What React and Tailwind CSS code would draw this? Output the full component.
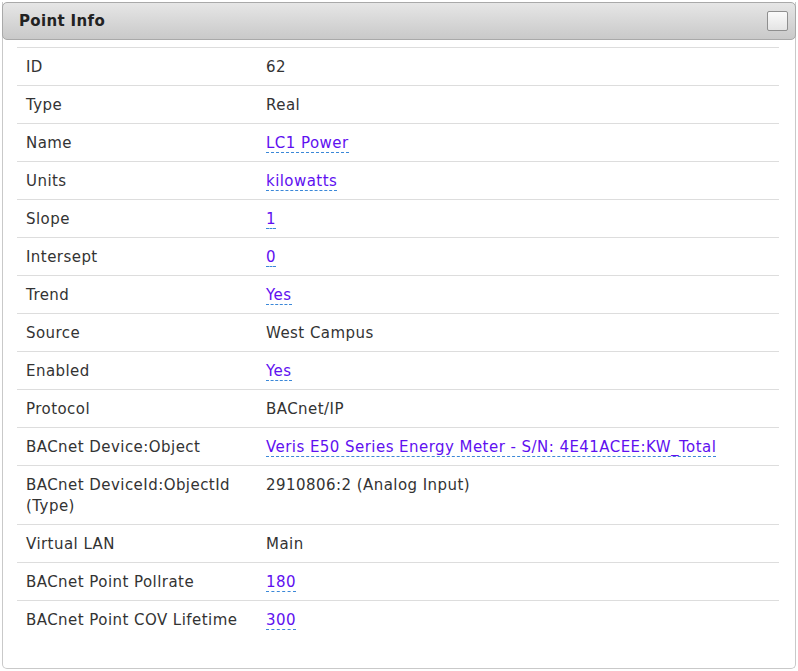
import React from 'react';

const rows = [
  { label: 'ID', value: '62' },
  { label: 'Type', value: 'Real' },
  { label: 'Name', value: 'LC1 Power', link: true },
  { label: 'Units', value: 'kilowatts', link: true },
  { label: 'Slope', value: '1', link: true },
  { label: 'Intersept', value: '0', link: true },
  { label: 'Trend', value: 'Yes', link: true },
  { label: 'Source', value: 'West Campus' },
  { label: 'Enabled', value: 'Yes', link: true },
  { label: 'Protocol', value: 'BACnet/IP' },
  { label: 'BACnet Device:Object', value: 'Veris E50 Series Energy Meter - S/N: 4E41ACEE:KW_Total', link: true },
  { label: 'BACnet DeviceId:ObjectId (Type)', value: '2910806:2 (Analog Input)' },
  { label: 'Virtual LAN', value: 'Main' },
  { label: 'BACnet Point Pollrate', value: '180', link: true },
  { label: 'BACnet Point COV Lifetime', value: '300', link: true },
];

export default function App() {
  return (
    <div className="w-[798px] h-[671px] bg-white pt-[2px] pl-[2px] pr-[2px]" style={{ fontFamily: '"DejaVu Sans", Verdana, sans-serif' }}>
      <div className="h-[667px] border border-[#c9c9c9] border-t-0 rounded-b-[5px] flex flex-col">
        {/* header */}
        <div className="h-[38px] -mx-[1px] flex items-center justify-between pl-[16px] pr-[7px] rounded-[5px] border border-[#a9a9a9] bg-gradient-to-b from-[#e6e6e6] to-[#c9c9c9]">
          <span className="text-[15px] font-bold text-[#222] tracking-[0.35px]">Point Info</span>
          <span className="w-[21px] h-[20px] rounded-[2px] border border-[#8f8f8f] bg-gradient-to-b from-[#fafafa] to-[#e4e4e4]" />
        </div>

        {/* body */}
        <div className="pt-[7px] pl-[14px] pr-[16px]">
          <table className="w-full border-collapse text-[15px] tracking-[0.45px] text-[#333]">
            <tbody>
              {rows.map((r, i) => (
                <tr key={r.label} className={`border-t border-[#dddddd] ${i === rows.length - 1 ? '' : 'border-b'}`}>
                  <td className="w-[249px] align-top pl-[9px] pr-[9px] pt-[9px] pb-[7px] leading-[21px]">{r.label}</td>
                  <td className="align-top pl-0 pt-[9px] pb-[7px] leading-[21px]">
                    {r.link ? (
                      <a className="text-[#6010f0] border-b border-dashed border-[#3b88d8]">{r.value}</a>
                    ) : (
                      r.value
                    )}
                  </td>
                </tr>
              ))}
            </tbody>
          </table>
        </div>
      </div>
    </div>
  );
}
